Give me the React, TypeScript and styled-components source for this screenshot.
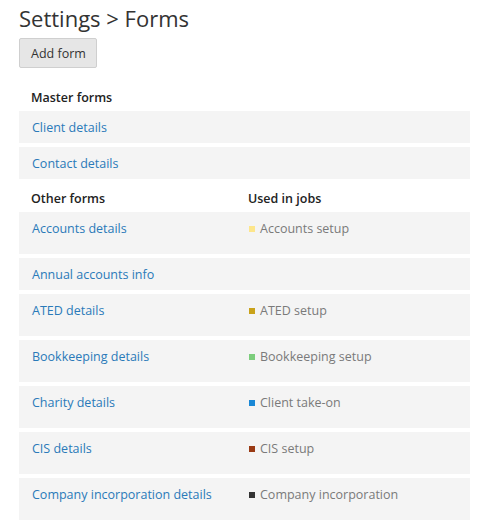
import * as React from "react";
import styled, { createGlobalStyle } from "styled-components";

const GlobalStyle = createGlobalStyle`
  body {
    margin: 0;
    background: #fff;
    font-family: "Open Sans", "Liberation Sans", sans-serif;
    color: #333;
  }
`;

const Page = styled.div`
  padding: 4px 16px 0 19px;
`;

const Title = styled.h1`
  margin: 0;
  font-size: 22px;
  font-weight: 400;
  line-height: 28px;
  color: #333;
`;

const Button = styled.button`
  margin-top: 6px;
  height: 30px;
  padding: 0 10px 0 11px;
  font-family: inherit;
  font-size: 12.5px;
  color: #333;
  background: #e6e6e6;
  border: 1px solid #cfcfcf;
  border-radius: 2px;
`;

const Table = styled.div`
  margin-top: 14px;
  display: flex;
  flex-direction: column;
  gap: 4px;
`;

const Row = styled.div<{ $head?: boolean }>`
  display: grid;
  grid-template-columns: 217px 1fr;
  padding: ${(p) => (p.$head ? "7px 13px 0 12px" : "8px 13px 6px 13px")};
  background: ${(p) => (p.$head ? "transparent" : "#f4f4f4")};
  font-size: 12.5px;
  line-height: 18px;
`;

const HeadCell = styled.div`
  font-weight: 600;
  color: #222;
`;

const Link = styled.a`
  color: #2a7ab9;
  text-decoration: none;
  cursor: pointer;
`;

const Jobs = styled.div`
  padding-bottom: 10px;
`;

const Job = styled.div`
  display: flex;
  align-items: center;
  gap: 5px;
  color: #7a7a7a;
`;

const Swatch = styled.span<{ color: string }>`
  width: 6px;
  height: 6px;
  background: ${(p) => p.color};
`;

const master = ["Client details", "Contact details"];

const others: { name: string; job?: string; color?: string }[] = [
  { name: "Accounts details", job: "Accounts setup", color: "#fde68b" },
  { name: "Annual accounts info" },
  { name: "ATED details", job: "ATED setup", color: "#c9a21a" },
  { name: "Bookkeeping details", job: "Bookkeeping setup", color: "#7ccd7c" },
  { name: "Charity details", job: "Client take-on", color: "#1a88d6" },
  { name: "CIS details", job: "CIS setup", color: "#993a14" },
  { name: "Company incorporation details", job: "Company incorporation", color: "#333333" },
];

export default function App() {
  return (
    <Page>
      <GlobalStyle />
      <Title>Settings &gt; Forms</Title>
      <Button>Add form</Button>
      <Table>
        <Row $head>
          <HeadCell>Master forms</HeadCell>
        </Row>
        {master.map((m) => (
          <Row key={m}>
            <Link>{m}</Link>
          </Row>
        ))}
        <Row $head>
          <HeadCell>Other forms</HeadCell>
          <HeadCell>Used in jobs</HeadCell>
        </Row>
        {others.map((o) => (
          <Row key={o.name}>
            <Link>{o.name}</Link>
            {o.job ? (
              <Jobs>
                <Job>
                  <Swatch color={o.color!} />
                  {o.job}
                </Job>
              </Jobs>
            ) : (
              <div />
            )}
          </Row>
        ))}
      </Table>
    </Page>
  );
}
